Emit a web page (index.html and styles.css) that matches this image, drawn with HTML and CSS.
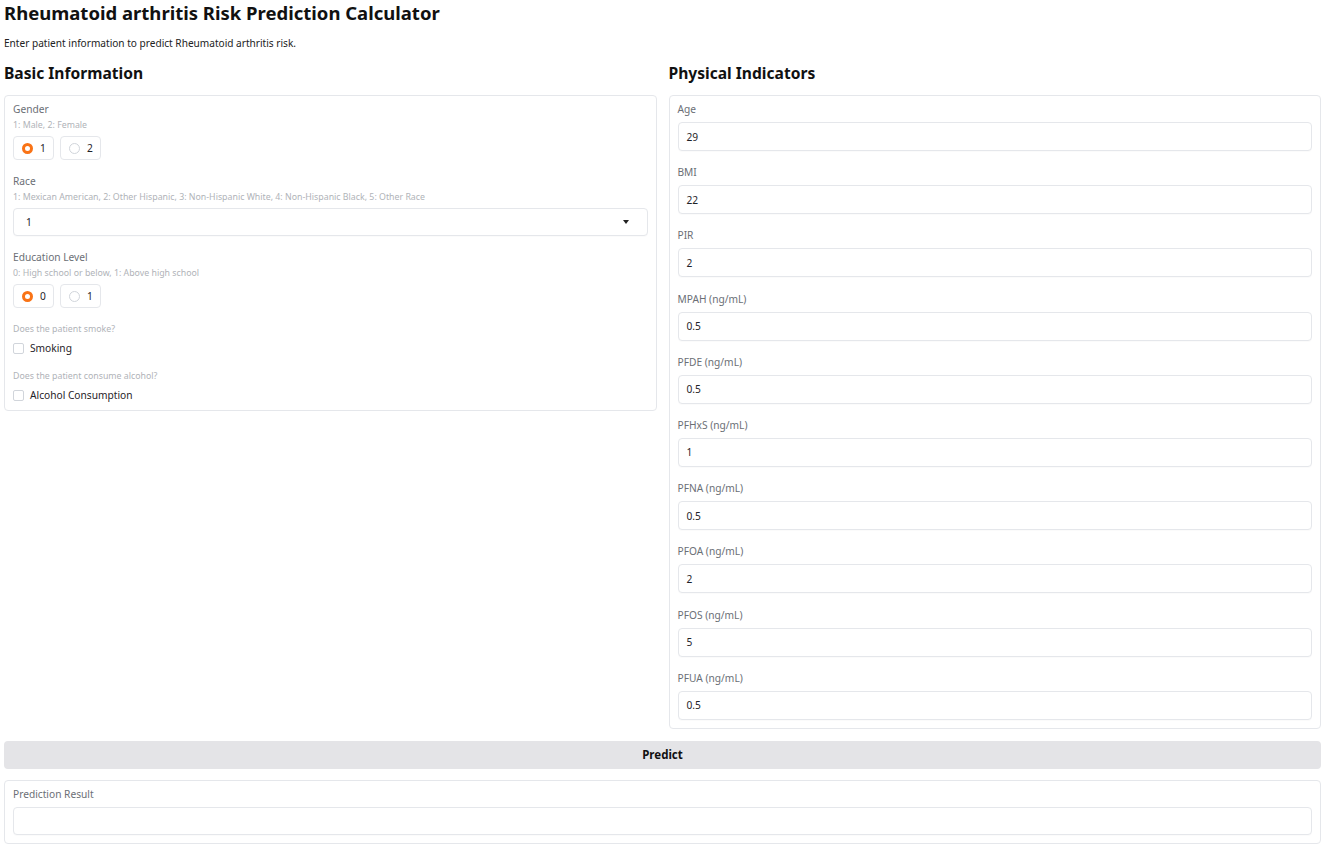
FILE: index.html
```html
<!DOCTYPE html>
<html lang="en">
<head>
<meta charset="utf-8">
<title>Rheumatoid arthritis Risk Prediction Calculator</title>
<link rel="stylesheet" href="styles.css">
</head>
<body>
<div class="page">
  <h1 class="title">Rheumatoid arthritis Risk Prediction Calculator</h1>
  <p class="subtitle">Enter patient information to predict Rheumatoid arthritis risk.</p>

  <div class="columns">
    <div class="col">
      <h2 class="section">Basic Information</h2>
      <div class="panel">
        <div class="block">
          <div class="label">Gender</div>
          <div class="info">1: Male, 2: Female</div>
          <div class="radios">
            <label class="radio"><span class="dot on"></span>1</label>
            <label class="radio"><span class="dot"></span>2</label>
          </div>
        </div>
        <div class="block">
          <div class="label">Race</div>
          <div class="info">1: Mexican American, 2: Other Hispanic, 3: Non-Hispanic White, 4: Non-Hispanic Black, 5: Other Race</div>
          <div class="select"><span>1</span><span class="caret"></span></div>
        </div>
        <div class="block">
          <div class="label">Education Level</div>
          <div class="info">0: High school or below, 1: Above high school</div>
          <div class="radios">
            <label class="radio"><span class="dot on"></span>0</label>
            <label class="radio"><span class="dot"></span>1</label>
          </div>
        </div>
        <div class="block">
          <div class="info tall">Does the patient smoke?</div>
          <label class="check"><span class="box"></span>Smoking</label>
        </div>
        <div class="block">
          <div class="info tall">Does the patient consume alcohol?</div>
          <label class="check"><span class="box"></span>Alcohol Consumption</label>
        </div>
      </div>
    </div>

    <div class="col">
      <h2 class="section">Physical Indicators</h2>
      <div class="panel fields">
        <div class="field"><div class="label">Age</div><div class="input">29</div></div>
        <div class="field"><div class="label">BMI</div><div class="input">22</div></div>
        <div class="field"><div class="label">PIR</div><div class="input">2</div></div>
        <div class="field"><div class="label">MPAH (ng/mL)</div><div class="input">0.5</div></div>
        <div class="field"><div class="label">PFDE (ng/mL)</div><div class="input">0.5</div></div>
        <div class="field"><div class="label">PFHxS (ng/mL)</div><div class="input">1</div></div>
        <div class="field"><div class="label">PFNA (ng/mL)</div><div class="input">0.5</div></div>
        <div class="field"><div class="label">PFOA (ng/mL)</div><div class="input">2</div></div>
        <div class="field"><div class="label">PFOS (ng/mL)</div><div class="input">5</div></div>
        <div class="field"><div class="label">PFUA (ng/mL)</div><div class="input">0.5</div></div>
      </div>
    </div>
  </div>

  <button class="predict">Predict</button>

  <div class="panel result">
    <div class="field"><div class="label">Prediction Result</div><div class="input empty"></div></div>
  </div>
</div>
</body>
</html>
```

FILE: styles.css
```css
* { box-sizing: border-box; }

html, body {
  margin: 0;
  padding: 0;
  background: #ffffff;
}

body {
  font-family: "Noto Sans", "Open Sans", Arial, sans-serif;
  color: #111111;
}

.page {
  padding: 0 4px 4px 4px;
  display: flex;
  flex-direction: column;
}

.title {
  margin: 0;
  font-size: 18.5px;
  line-height: 26px;
  font-weight: 700;
  color: #111;
}

.subtitle {
  margin: 9px 0 0 0;
  font-size: 10.1px;
  line-height: 16px;
  color: #222;
}

.columns {
  display: grid;
  grid-template-columns: 1fr 1fr;
  column-gap: 12px;
  align-items: start;
  margin-top: 11px;
}

.col {
  display: flex;
  flex-direction: column;
}

.section {
  margin: 0 0 11px 0;
  font-size: 15.6px;
  line-height: 22px;
  font-weight: 700;
  color: #111;
}

.panel {
  border: 1px solid #e5e7eb;
  border-radius: 4px;
  background: #fff;
  padding: 6px 8px 8px 8px;
  display: flex;
  flex-direction: column;
  gap: 14px;
}

.panel.fields {
  gap: 14.2px;
}

.field {
  display: flex;
  flex-direction: column;
}

.label {
  font-size: 10.2px;
  line-height: 14px;
  color: #6b6f76;
}

.field .label { margin-bottom: 6px; }

.block .label { margin-bottom: 3px; }

.info {
  font-size: 8.8px;
  line-height: 12px;
  color: #b0b3b8;
  margin-bottom: 5px;
}

.info.tall {
  line-height: 14px;
}

.input, .select {
  height: 29px;
  border: 1px solid #e5e7eb;
  border-radius: 4px;
  background: #fff;
  box-shadow: 0 1px 1px rgba(0, 0, 0, 0.02);
  font-size: 10.2px;
  color: #1f2328;
  display: flex;
  align-items: center;
  padding: 0 8px;
}

.select {
  height: 28px;
  padding: 0 12px;
  justify-content: space-between;
}

.caret {
  width: 0;
  height: 0;
  border-left: 3.5px solid transparent;
  border-right: 3.5px solid transparent;
  border-top: 4px solid #222;
  margin-right: 6px;
}

.radios {
  display: flex;
  gap: 6px;
}

.radio {
  width: 41px;
  height: 24px;
  border: 1px solid #e5e7eb;
  border-radius: 4px;
  display: flex;
  align-items: center;
  padding-left: 8px;
  gap: 7px;
  font-size: 10.2px;
  color: #1f2328;
}

.dot {
  width: 11px;
  height: 11px;
  border-radius: 50%;
  border: 1px solid #d1d5db;
  background: #fff;
  flex: none;
}

.dot.on {
  border: 3px solid #f97316;
  background: #fff;
}

.check {
  display: flex;
  align-items: center;
  gap: 6px;
  height: 14px;
  font-size: 10.2px;
  color: #1f2328;
}

.box {
  width: 11px;
  height: 11px;
  border: 1px solid #d1d5db;
  border-radius: 2px;
  background: #fff;
  flex: none;
}

.predict {
  margin-top: 12px;
  height: 28px;
  border: none;
  border-radius: 4px;
  background: #e4e4e7;
  font-family: inherit;
  font-size: 11.5px;
  font-weight: 700;
  color: #111;
  padding: 0;
}

.result {
  margin-top: 11px;
}

.input.empty {
  height: 28px;
}
```
